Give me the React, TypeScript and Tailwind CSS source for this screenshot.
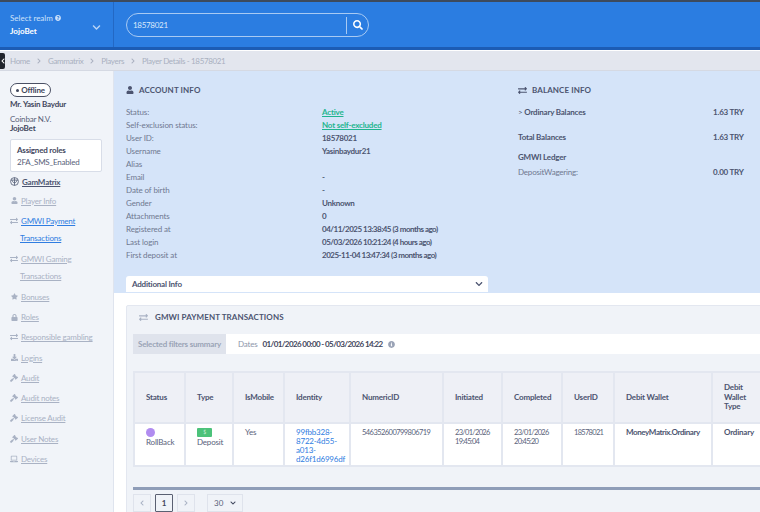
import { ReactNode } from 'react';
import {
  FaChevronDown,
  FaChevronLeft,
  FaChevronRight,
  FaDownload,
  FaExchangeAlt,
  FaGavel,
  FaInfoCircle,
  FaLaptop,
  FaLock,
  FaQuestionCircle,
  FaSearch,
  FaStar,
  FaUser,
} from 'react-icons/fa';

const accountRows: [string, string, string?][] = [
  ['Status:', 'Active', 'green'],
  ['Self-exclusion status:', 'Not self-excluded', 'green'],
  ['User ID:', '18578021'],
  ['Username', 'Yasinbaydur21'],
  ['Alias', ''],
  ['Email', '-'],
  ['Date of birth', '-'],
  ['Gender', 'Unknown'],
  ['Attachments', '0'],
  ['Registered at', '04/11/2025 13:38:45 (3 months ago)'],
  ['Last login', '05/03/2026 10:21:24 (4 hours ago)'],
  ['First deposit at', '2025-11-04 13:47:34 (3 months ago)'],
];

const columns: [string, string][] = [
  ['Status', 'w-[51px]'],
  ['Type', 'w-[48px]'],
  ['IsMobile', 'w-[51px]'],
  ['Identity', 'w-[66px]'],
  ['NumericID', 'w-[93px]'],
  ['Initiated', 'w-[59px]'],
  ['Completed', 'w-[60px]'],
  ['UserID', 'w-[52px]'],
  ['Debit Wallet', 'w-[98px]'],
  ['Debit Wallet Type', 'w-[60px]'],
];

function SideLink({ icon, label, tone = 'text-[#a9b2c4]', className = 'mt-[9.25px]' }: { icon?: ReactNode; label: string; tone?: string; className?: string }) {
  return (
    <div className={`flex h-[11px] items-center gap-[3px] ${className}`}>
      {icon && <span className="flex w-[8px] justify-center text-[#a9b2c4]">{icon}</span>}
      <span className={`underline ${tone}`}>{label}</span>
    </div>
  );
}

function Sidebar() {
  return (
    <aside className="w-[114px] shrink-0 border-r border-[#dfe4ee] bg-[#f1f4f9] pl-[10px] pt-[12px] text-[8px] tracking-[-0.2px] text-[#59627a]">
      <div className="flex h-[14px] w-[41px] items-center justify-center gap-[2px] rounded-full border border-[#4a5064] bg-white font-bold text-[#3f465c]">
        <span className="h-[3px] w-[3px] rounded-full bg-[#3f465c]" />
        Offline
      </div>
      <div className="mt-[1px] font-bold leading-[12px] text-[#3f465c]">Mr. Yasin Baydur</div>
      <div className="mt-[4px] leading-[10px]">Coinbar N.V.</div>
      <div className="font-bold leading-[9px] text-[#3f465c]">JojoBet</div>
      <div className="mt-[6px] h-[33px] w-[92px] rounded-[2px] border border-[#d8dde8] bg-white pl-[6px] pt-[5px] leading-[11px]">
        <div className="font-bold text-[#3f465c]">Assigned roles</div>
        <div className="mt-[1px]">2FA_SMS_Enabled</div>
      </div>
      <div className="mt-[4px] flex h-[11px] items-center gap-[3px]">
        <svg viewBox="0 0 16 16" className="h-[9px] w-[9px] text-[#59627a]" fill="none" stroke="currentColor" strokeWidth="1.5">
          <circle cx="8" cy="8" r="7" />
          <path d="M1.5 5.5h13M8 1v14M4 6c0 3 2 4 4 4s4-1 4-4" />
        </svg>
        <span className="font-bold text-[#4c5470] underline">GamMatrix</span>
      </div>
      <SideLink icon={<FaUser size={7} />} label="Player Info" className="mt-[8px]" />
      <SideLink icon={<FaExchangeAlt size={8} />} label="GMWI Payment" tone="text-[#2f7de1]" />
      <div className="ml-[10px] mt-[6.5px] leading-[11px] text-[#2f7de1] underline">Transactions</div>
      <SideLink icon={<FaExchangeAlt size={8} />} label="GMWI Gaming" />
      <div className="ml-[10px] mt-[7px] leading-[11px] text-[#a9b2c4] underline">Transactions</div>
      <SideLink icon={<FaStar size={7} />} label="Bonuses" />
      <SideLink icon={<FaLock size={7} />} label="Roles" />
      <SideLink icon={<FaExchangeAlt size={8} />} label="Responsible gambling" />
      <SideLink icon={<FaDownload size={7} />} label="Logins" />
      <SideLink icon={<FaGavel size={8} />} label="Audit" />
      <SideLink icon={<FaGavel size={8} />} label="Audit notes" />
      <SideLink icon={<FaGavel size={8} />} label="License Audit" />
      <SideLink icon={<FaGavel size={8} />} label="User Notes" />
      <SideLink icon={<FaLaptop size={8} />} label="Devices" />
    </aside>
  );
}

function AccountInfo() {
  return (
    <div className="w-[392px]">
      <div className="mt-px flex h-[12px] items-center gap-[5px] text-[8px] font-bold tracking-[0.1px] text-[#4c5470]">
        <FaUser size={8} />
        ACCOUNT INFO
      </div>
      <div className="mt-[9px]">
        {accountRows.map(([label, value, tone]) => (
          <div key={label} className="flex h-[13px] items-center text-[8px]">
            <span className="w-[196px] tracking-[-0.1px] text-[#6f7890]">{label}</span>
            <span
              className={
                tone === 'green'
                  ? 'font-bold tracking-[-0.2px] text-[#1fb58f] underline'
                  : value.length > 20
                    ? 'font-bold tracking-[-0.5px] text-[#4c5470]'
                    : 'font-bold tracking-[-0.3px] text-[#4c5470]'
              }
            >
              {value}
            </span>
          </div>
        ))}
      </div>
    </div>
  );
}

function BalanceInfo() {
  return (
    <div className="w-[228px] text-[8px] font-bold tracking-[-0.2px] text-[#4c5470]">
      <div className="mt-px flex h-[12px] items-center gap-[5px] text-[8px] tracking-[0.1px]">
        <FaExchangeAlt size={9} />
        BALANCE INFO
      </div>
      <div className="mt-[9px] flex h-[13px] items-center justify-between">
        <span>
          <span className="font-normal">&gt;</span> Ordinary Balances
        </span>
        <span className="w-[33px]">1.63 TRY</span>
      </div>
      <div className="mt-[12px] flex h-[13px] items-center justify-between">
        <span>Total Balances</span>
        <span className="w-[33px]">1.63 TRY</span>
      </div>
      <div className="mt-[7px] flex h-[13px] items-center">GMWI Ledger</div>
      <div className="mt-[2px] flex h-[13px] items-center justify-between">
        <span className="font-normal text-[#6f7890]">DepositWagering:</span>
        <span className="w-[33px]">0.00 TRY</span>
      </div>
    </div>
  );
}

function TransactionsTable() {
  return (
    <table className="ml-[6px] mt-[17px] table-fixed border-collapse text-[8px] tracking-[-0.2px] text-[#59627a]">
      <thead>
        <tr className="h-[51px] bg-[#eef0f6] font-bold text-[#4c5470]">
          {columns.map(([name, width]) => (
            <th key={name} className={`${width} border-2 border-[#e3e7f0] pl-[11px] pr-[2px] text-left font-bold leading-[9.5px]`}>
              {name === 'Debit Wallet Type' ? <div className="w-[24px]">{name}</div> : name}
            </th>
          ))}
        </tr>
      </thead>
      <tbody>
        <tr className="h-[43px] bg-white align-top leading-[9px]">
          <td className="border-2 border-[#e3e7f0] pl-[11px] pt-[4px]">
            <div className="h-[9px] w-[9px] rounded-full bg-[#b18cf0]" />
            <div className="mt-[1px]">RollBack</div>
          </td>
          <td className="border-2 border-[#e3e7f0] pl-[11px] pt-[4px]">
            <div className="flex h-[9px] w-[15px] items-center justify-center rounded-[1px] bg-[#4cc27a] text-[5px] text-[#cdeed9]">$</div>
            <div className="mt-[1px]">Deposit</div>
          </td>
          <td className="border-2 border-[#e3e7f0] pl-[11px] pt-[4px]">Yes</td>
          <td className="border-2 border-[#e3e7f0] pl-[11px] pt-[4px] text-[#2f7de1]">99fbb328-8722-4d55-a013-d26f1d6996df</td>
          <td className="border-2 border-[#e3e7f0] pl-[11px] pt-[4px] text-[7.5px] tracking-[-0.55px]">546352600799806719</td>
          <td className="border-2 border-[#e3e7f0] pl-[11px] pt-[4px] text-[7.5px] tracking-[-0.7px]">23/01/2026 19:45:04</td>
          <td className="border-2 border-[#e3e7f0] pl-[11px] pt-[4px] text-[7.5px] tracking-[-0.7px]">23/01/2026 20:45:20</td>
          <td className="border-2 border-[#e3e7f0] pl-[11px] pt-[4px] text-[7.5px] tracking-[-0.7px]">18578021</td>
          <td className="border-2 border-[#e3e7f0] pl-[11px] pt-[4px] font-bold tracking-[-0.4px] text-[#4c5470]">MoneyMatrix.Ordinary</td>
          <td className="border-2 border-[#e3e7f0] pl-[11px] pt-[4px] font-bold text-[#4c5470]">Ordinary</td>
        </tr>
      </tbody>
    </table>
  );
}

function Pager() {
  return (
    <div className="ml-[6px] mt-[4px] flex items-center gap-[4px] text-[8px] text-[#59627a]">
      <span className="flex h-[18px] w-[18px] items-center justify-center border border-[#dfe3ec] text-[#a9b2c4]">
        <FaChevronLeft size={6} />
      </span>
      <span className="flex h-[18px] w-[18px] items-center justify-center rounded-[1px] border border-[#5a6072] font-bold text-[#3f465c]">1</span>
      <span className="flex h-[18px] w-[18px] items-center justify-center border border-[#dfe3ec] text-[#a9b2c4]">
        <FaChevronRight size={6} />
      </span>
      <span className="ml-[8px] flex h-[18px] w-[36px] items-center justify-between border border-[#dfe3ec] px-[6px]">
        30
        <FaChevronDown size={6} className="text-[#3f465c]" />
      </span>
    </div>
  );
}

export default function App() {
  return (
    <div className="h-[512px] w-[760px] overflow-hidden bg-white font-['Lato',sans-serif]">
      <div className="h-[2px] bg-[#3d4a5c]" />
      <header className="flex h-[48px] border-b-[3px] border-[#1c5cb4] bg-[#2b7de1] text-white">
        <div className="flex w-[114px] shrink-0 items-center justify-between border-r border-[#2368c4] pl-[10px] pr-[12px] text-[8px]">
          <div>
            <div className="flex items-center gap-[2px] text-[#cfe2fa]">
              Select realm <FaQuestionCircle size={6} />
            </div>
            <div className="mt-[1px] font-bold">JojoBet</div>
          </div>
          <FaChevronDown size={9} className="mt-[5px] text-[#b9d4f6]" />
        </div>
        <div className="ml-[12px] mt-[11px] flex h-[24px] w-[243px] items-center rounded-full border border-[#a8caf3] pl-[6px] text-[8px] tracking-[-0.3px] text-[#dbe9fb]">
          <span className="flex-1">18578021</span>
          <span className="flex h-[17px] w-[22px] items-center justify-center border-l border-[#a8caf3]">
            <FaSearch size={10} className="text-white" />
          </span>
        </div>
      </header>
      <div className="mt-px flex h-[20px] items-center border-b border-[#d5d9e3] bg-[#e3e6ee] text-[8px] tracking-[-0.35px] text-[#a9b0bf]">
        <span className="mr-[5px] flex h-[16px] w-[5px] items-center justify-center overflow-hidden rounded-r-[2px] bg-[#20242c] text-white">
          <FaChevronLeft size={6} className="shrink-0" />
        </span>
        <span>Home</span>
        <FaChevronRight size={6} className="mx-[6px]" />
        <span>Gammatrix</span>
        <FaChevronRight size={6} className="mx-[6px]" />
        <span>Players</span>
        <FaChevronRight size={6} className="mx-[6px]" />
        <span>Player Details - 18578021</span>
      </div>
      <div className="flex h-[441px]">
        <Sidebar />
        <main className="w-[646px] overflow-hidden">
          <div className="h-[222px] bg-[#d5e4f9] pl-[12px] pt-[12px]">
            <div className="flex">
              <AccountInfo />
              <BalanceInfo />
            </div>
            <div className="mt-[15px] flex h-[16px] w-[362px] items-center justify-between rounded-t-[3px] bg-white pl-[6px] pr-[5px] text-[8px] font-bold tracking-[-0.2px] text-[#4c5470]">
              Additional Info
              <FaChevronDown size={8} />
            </div>
          </div>
          <section className="ml-[12px] mt-[12px] h-[220px] w-[660px] rounded-[2px] border border-[#e3e7f0] bg-[#f0f3f8]">
            <div className="flex h-[22px] items-center gap-[7px] pl-[12px] text-[8px] font-bold tracking-[0.1px] text-[#4c5470]">
              <FaExchangeAlt size={9} className="text-[#a9b2c4]" />
              GMWI PAYMENT TRANSACTIONS
            </div>
            <div className="ml-[6px] mt-[6px] flex h-[20px] items-center bg-white text-[8px] tracking-[-0.2px]">
              <span className="flex h-full w-[93px] items-center justify-center whitespace-nowrap bg-[#dfe3ec] font-bold text-[#9aa3b6]">Selected filters summary</span>
              <span className="ml-[12px] text-[#8d96aa]">Dates</span>
              <span className="ml-[5px] font-bold tracking-[-0.6px] text-[#3f465c]">01/01/2026 00:00 - 05/03/2026 14:22</span>
              <FaInfoCircle size={7} className="ml-[5px] text-[#9aa3b6]" />
            </div>
            <TransactionsTable />
            <div className="ml-[6px] mt-[20px] h-[3px] bg-[#8f9db8]" />
            <Pager />
          </section>
        </main>
      </div>
    </div>
  );
}
